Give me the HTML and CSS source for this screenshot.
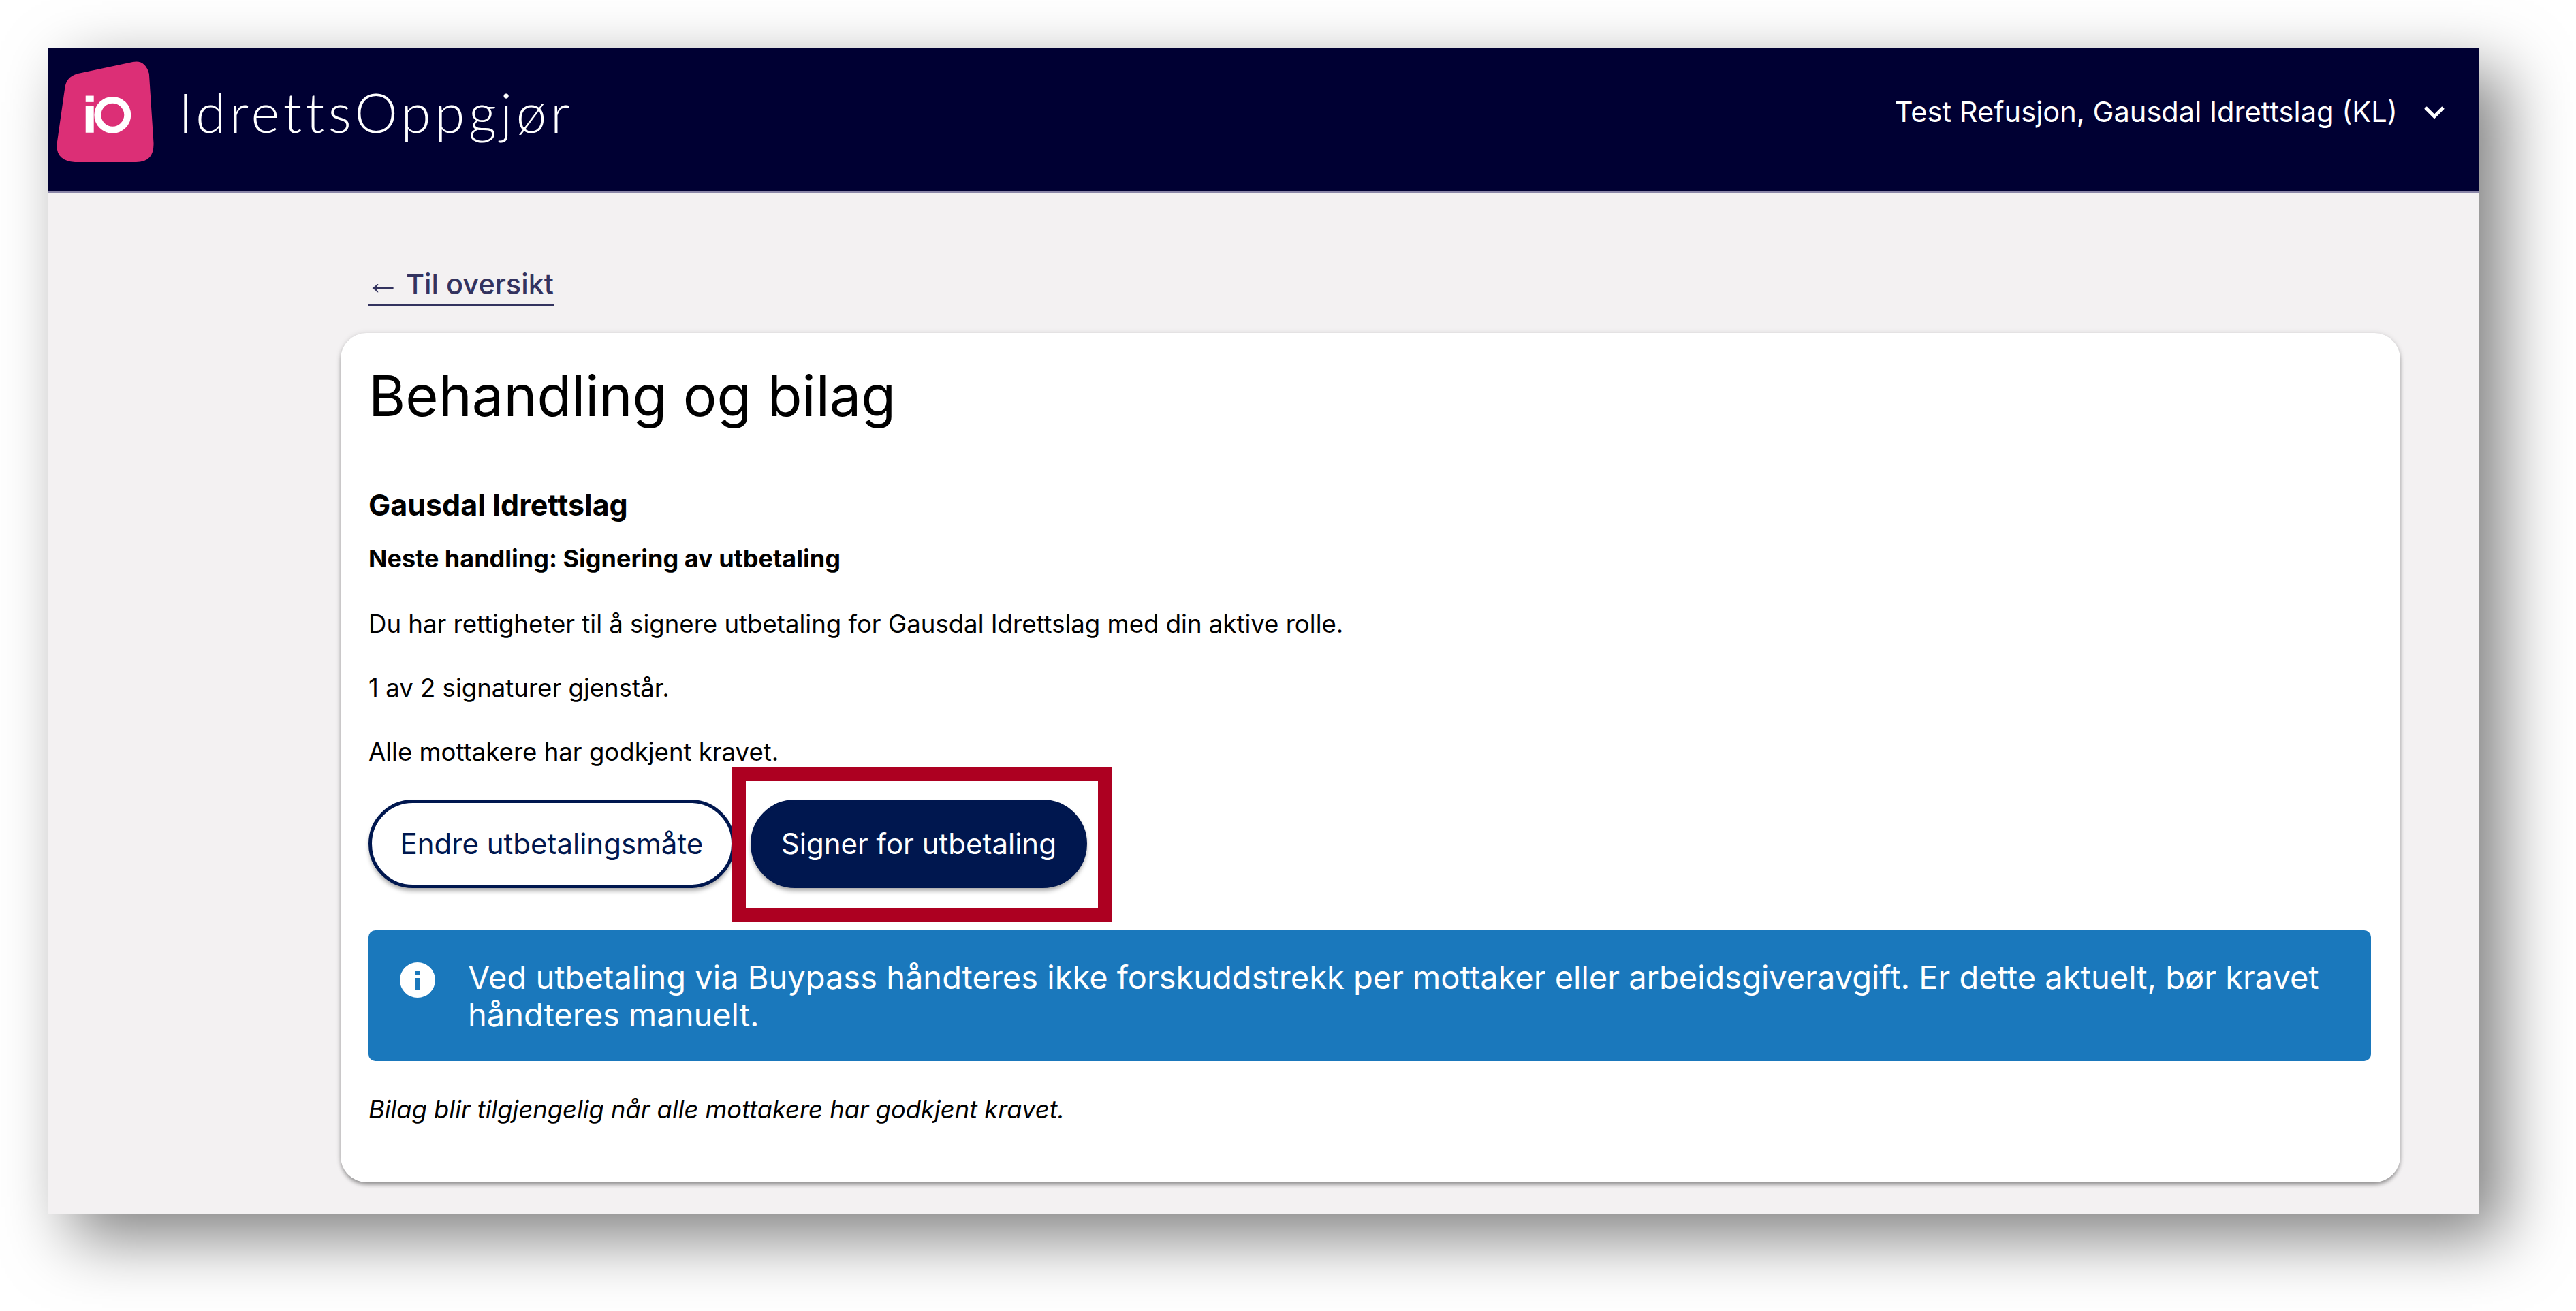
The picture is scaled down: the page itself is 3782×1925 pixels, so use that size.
FILE: index.html
```html
<!DOCTYPE html>
<html lang="nb">
  <head>
    <meta charset="UTF-8" />
    <meta name="viewport" content="width=device-width, initial-scale=1.0" />
    <title>IdrettsOppgjør - Behandling og bilag</title>
    <link rel="stylesheet" href="styles.css">
  </head>
  <body>
    <div class="window">
      <header class="topbar">
        <div class="brand">
          <svg class="brand-logo" viewBox="70 60 427 445" aria-hidden="true">
            <path fill="#dc2f76" d="M160 115 L405 63 Q460 52 477 115 L497 420 Q500 505 420 505 L150 505 Q65 500 70 425 L105 180 Q110 130 160 115 Z" />
            <rect fill="#fff" x="197" y="212" width="36" height="28" />
            <rect fill="#fff" x="197" y="258" width="36" height="117" />
            <circle cx="316" cy="297" r="66" fill="none" stroke="#fff" stroke-width="30" />
          </svg>
          <span class="brand-name">IdrettsOppgjør</span>
        </div>
        <div class="user">
          <span>Test Refusjon, Gausdal Idrettslag (KL)</span>
          <svg class="chevron" viewBox="0 0 32 20" aria-hidden="true">
            <path d="M3 3 L16 16 L29 3" fill="none" stroke="#fff" stroke-width="5" />
          </svg>
        </div>
      </header>

      <main class="content">
        <a class="back-link" href="#"><span class="arrow">←</span><span>Til oversikt</span></a>
        <section class="card">
          <h1>Behandling og bilag</h1>
          <h2>Gausdal Idrettslag</h2>
          <p class="next-step">Neste handling: Signering av utbetaling</p>
          <p class="line first">Du har rettigheter til å signere utbetaling for Gausdal Idrettslag med din aktive rolle.</p>
          <p class="line">1 av 2 signaturer gjenstår.</p>
          <p class="line">Alle mottakere har godkjent kravet.</p>
          <div class="actions">
            <button class="btn btn-outline">Endre utbetalingsmåte</button>
            <button class="btn btn-primary">Signer for utbetaling</button>
            <div class="highlight"></div>
          </div>
          <div class="alert">
            <svg class="alert-icon" viewBox="0 0 52 52" aria-hidden="true">
              <circle cx="26" cy="26" r="26" fill="#fff" />
              <rect x="23" y="13" width="6" height="6" fill="#1a78bc" />
              <rect x="23" y="23" width="6" height="17" fill="#1a78bc" />
            </svg>
            <p>Ved utbetaling via Buypass håndteres ikke forskuddstrekk per mottaker eller arbeidsgiveravgift. Er dette aktuelt, bør kravet håndteres manuelt.</p>
          </div>
          <p class="note">Bilag blir tilgjengelig når alle mottakere har godkjent kravet.</p>
        </section>
      </main>
    </div>
  </body>
</html>
```

FILE: styles.css
```css
/* Page */
html {
  height: 100%;
}

body {
  margin: 0;
  min-height: 100%;
  padding: 70px 0 0 70px;
  box-sizing: border-box;
  background-color: #fff;
  font-family: Inter, "Liberation Sans", sans-serif;
  color: #000;
}

.window {
  width: 3570px;
  background-color: #f3f1f2;
  box-shadow: 35px 35px 90px rgba(0, 0, 0, 0.5);
}

/* Top bar */
.topbar {
  height: 211px;
  border-bottom: 2px solid #8a86a8;
  background-color: #000033;
  color: #fff;
  display: flex;
  justify-content: space-between;
}

.brand {
  display: flex;
  align-items: flex-start;
}

.brand-logo {
  width: 143px;
  height: 148px;
  margin: 20px 0 0 13px;
}

.brand-name {
  margin: 46px 0 0 36px;
  font-family: Lato, sans-serif;
  font-size: 80px;
  font-weight: 300;
  line-height: 96px;
  letter-spacing: 5.6px;
}

.user {
  display: flex;
  align-items: flex-start;
  gap: 38px;
  padding: 70px 50px 0 0;
  font-size: 41.6px;
  line-height: 48px;
}

.chevron {
  width: 32px;
  height: 20px;
  margin-top: 15px;
}

/* Main column */
.content {
  padding: 109px 116px 46px 430px;
}

.back-link {
  display: block;
  width: fit-content;
  margin-left: 41px;
  padding-bottom: 5px;
  border-bottom: 3px solid #33335f;
  color: #33335f;
  font-size: 41.5px;
  font-weight: 500;
  line-height: 50px;
  text-decoration: none;
}

.arrow {
  margin: 0 8px 0 -5px;
  font-family: "Liberation Sans", sans-serif;
  font-size: 52px;
  font-weight: 400;
  line-height: 40px;
}

.card {
  margin-top: 39px;
  padding: 43px 43px 85px 41px;
  background-color: #fff;
  border-radius: 38px;
  box-shadow: 0 4px 6px -1px rgba(0, 0, 0, 0.4), 0 0 8px rgba(0, 0, 0, 0.1);
}

h1 {
  margin: 0;
  font-size: 83px;
  font-weight: 400;
  line-height: 98px;
}

h2 {
  margin: 86px 0 0;
  font-size: 43px;
  font-weight: 700;
  line-height: 50px;
}

.next-step {
  margin: 32px 0 0;
  font-size: 36px;
  font-weight: 700;
  line-height: 44px;
}

.line {
  margin: 50px 0 0;
  font-size: 36.6px;
  line-height: 44px;
}

.line.first {
  margin-top: 52px;
}

/* Buttons */
.actions {
  position: relative;
  display: flex;
  gap: 23px;
  margin-top: 48px;
}

.btn {
  height: 130px;
  padding: 0 40px 2px;
  border-radius: 65px;
  font-family: inherit;
  font-size: 42px;
  box-sizing: border-box;
  box-shadow: 0 5px 6px -1px rgba(0, 0, 0, 0.35);
}

.btn-outline {
  padding: 0 41.5px 2px;
  background-color: #fff;
  border: 5px solid #00174f;
  color: #00174f;
}

.btn-primary {
  background-color: #00174f;
  border: 5px solid #00174f;
  color: #fff;
}

/* Red annotation drawn over the screenshot */
.highlight {
  position: absolute;
  left: 533px;
  top: -48px;
  width: 559px;
  height: 228px;
  border: 21px solid #ad0021;
  box-sizing: border-box;
}

/* Info box */
.alert {
  display: flex;
  align-items: flex-start;
  gap: 48px;
  margin-top: 62px;
  padding: 41px 46px 41px;
  background-color: #1a78bc;
  border-radius: 10px;
  color: #fff;
}

.alert-icon {
  flex: none;
  width: 52px;
  height: 52px;
  margin-top: 6px;
}

.alert p {
  margin: 0;
  font-size: 47px;
  line-height: 55px;
}

.note {
  margin: 49px 0 0;
  font-size: 36.3px;
  font-style: italic;
  line-height: 44px;
}
```
